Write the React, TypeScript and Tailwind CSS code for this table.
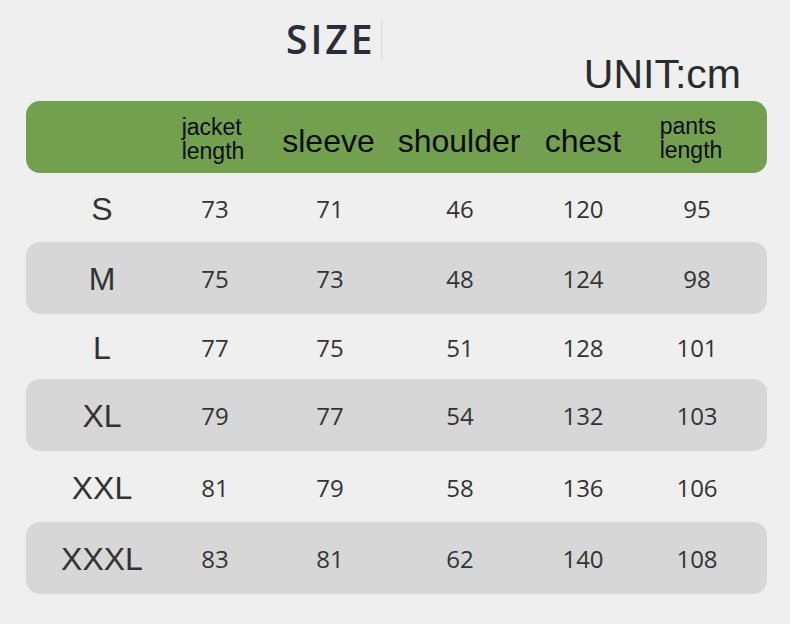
import React from "react";

const rows = [
  { s: "S", v: ["73", "71", "46", "120", "95"], h: "h-[69px]", g: false },
  { s: "M", v: ["75", "73", "48", "124", "98"], h: "h-[72px]", g: true },
  { s: "L", v: ["77", "75", "51", "128", "101"], h: "h-[65px]", g: false },
  { s: "XL", v: ["79", "77", "54", "132", "103"], h: "h-[72px]", g: true },
  { s: "XXL", v: ["81", "79", "58", "136", "106"], h: "h-[71px]", g: false },
  { s: "XXXL", v: ["83", "81", "62", "140", "108"], h: "h-[72px]", g: true },
];

const cols = "grid grid-cols-[152px_74px_156px_104px_142px_86px_1fr]";

function Cell({ children, className = "" }: { children: React.ReactNode; className?: string }) {
  return (
    <div className={`flex items-center justify-center whitespace-nowrap ${className}`}>{children}</div>
  );
}

export default function App() {
  return (
    <div className="w-[790px] h-[624px] bg-[#efefef] overflow-hidden">
      <div className="h-[101px] relative flex">
        <div
          className="ml-[286px] mt-[16px] text-[39px] font-semibold tracking-[3px] text-[#2a2d36] leading-[46px]"
          style={{ fontFamily: '"Open Sans", sans-serif' }}
        >
          SIZE
        </div>
        <div className="absolute left-[381px] top-[20px] w-px h-[40px] bg-[#d8d8d8]" />
        <div
          className="ml-auto mr-[49px] mt-[52px] text-[41px] text-[#2b2b2b] leading-[44px]"
          style={{ fontFamily: '"Liberation Sans", Arial, sans-serif' }}
        >
          UNIT:cm
        </div>
      </div>
      <div className="mx-[26px] w-[741px]">
        <div
          className={`${cols} h-[72px] bg-[#73a04f] rounded-[14px] text-[#0c0c0c]`}
          style={{ fontFamily: '"Liberation Sans", Arial, sans-serif' }}
        >
          <div />
          <Cell className="pt-[4px]">
            <div className="flex flex-col items-start text-[23px] leading-[24px] pr-[4px]">
              <span>jacket</span>
              <span>length</span>
            </div>
          </Cell>
          <Cell className="text-[32px] pt-[8px] pr-[3px]">sleeve</Cell>
          <Cell className="text-[32px] pt-[8px] pr-[2px]">shoulder</Cell>
          <Cell className="text-[32px] pt-[8px]">chest</Cell>
          <Cell className="pt-[2px]">
            <div className="flex flex-col items-start text-[23px] leading-[24px] pr-[12px]">
              <span>pants</span>
              <span>length</span>
            </div>
          </Cell>
          <div />
        </div>
        {rows.map((r) => (
          <div
            key={r.s}
            className={`${cols} ${r.h} ${r.g ? "bg-[#d7d7d7] rounded-[14px]" : ""} text-[#333333]`}
          >
            <Cell className="text-[32px] pt-[2px]">
              <span style={{ fontFamily: '"Liberation Sans", Arial, sans-serif' }}>{r.s}</span>
            </Cell>
            {r.v.map((x, i) => (
              <Cell key={i} className="text-[24px] pt-[2px]">
                <span style={{ fontFamily: '"Open Sans", sans-serif' }}>{x}</span>
              </Cell>
            ))}
            <div />
          </div>
        ))}
      </div>
    </div>
  );
}
